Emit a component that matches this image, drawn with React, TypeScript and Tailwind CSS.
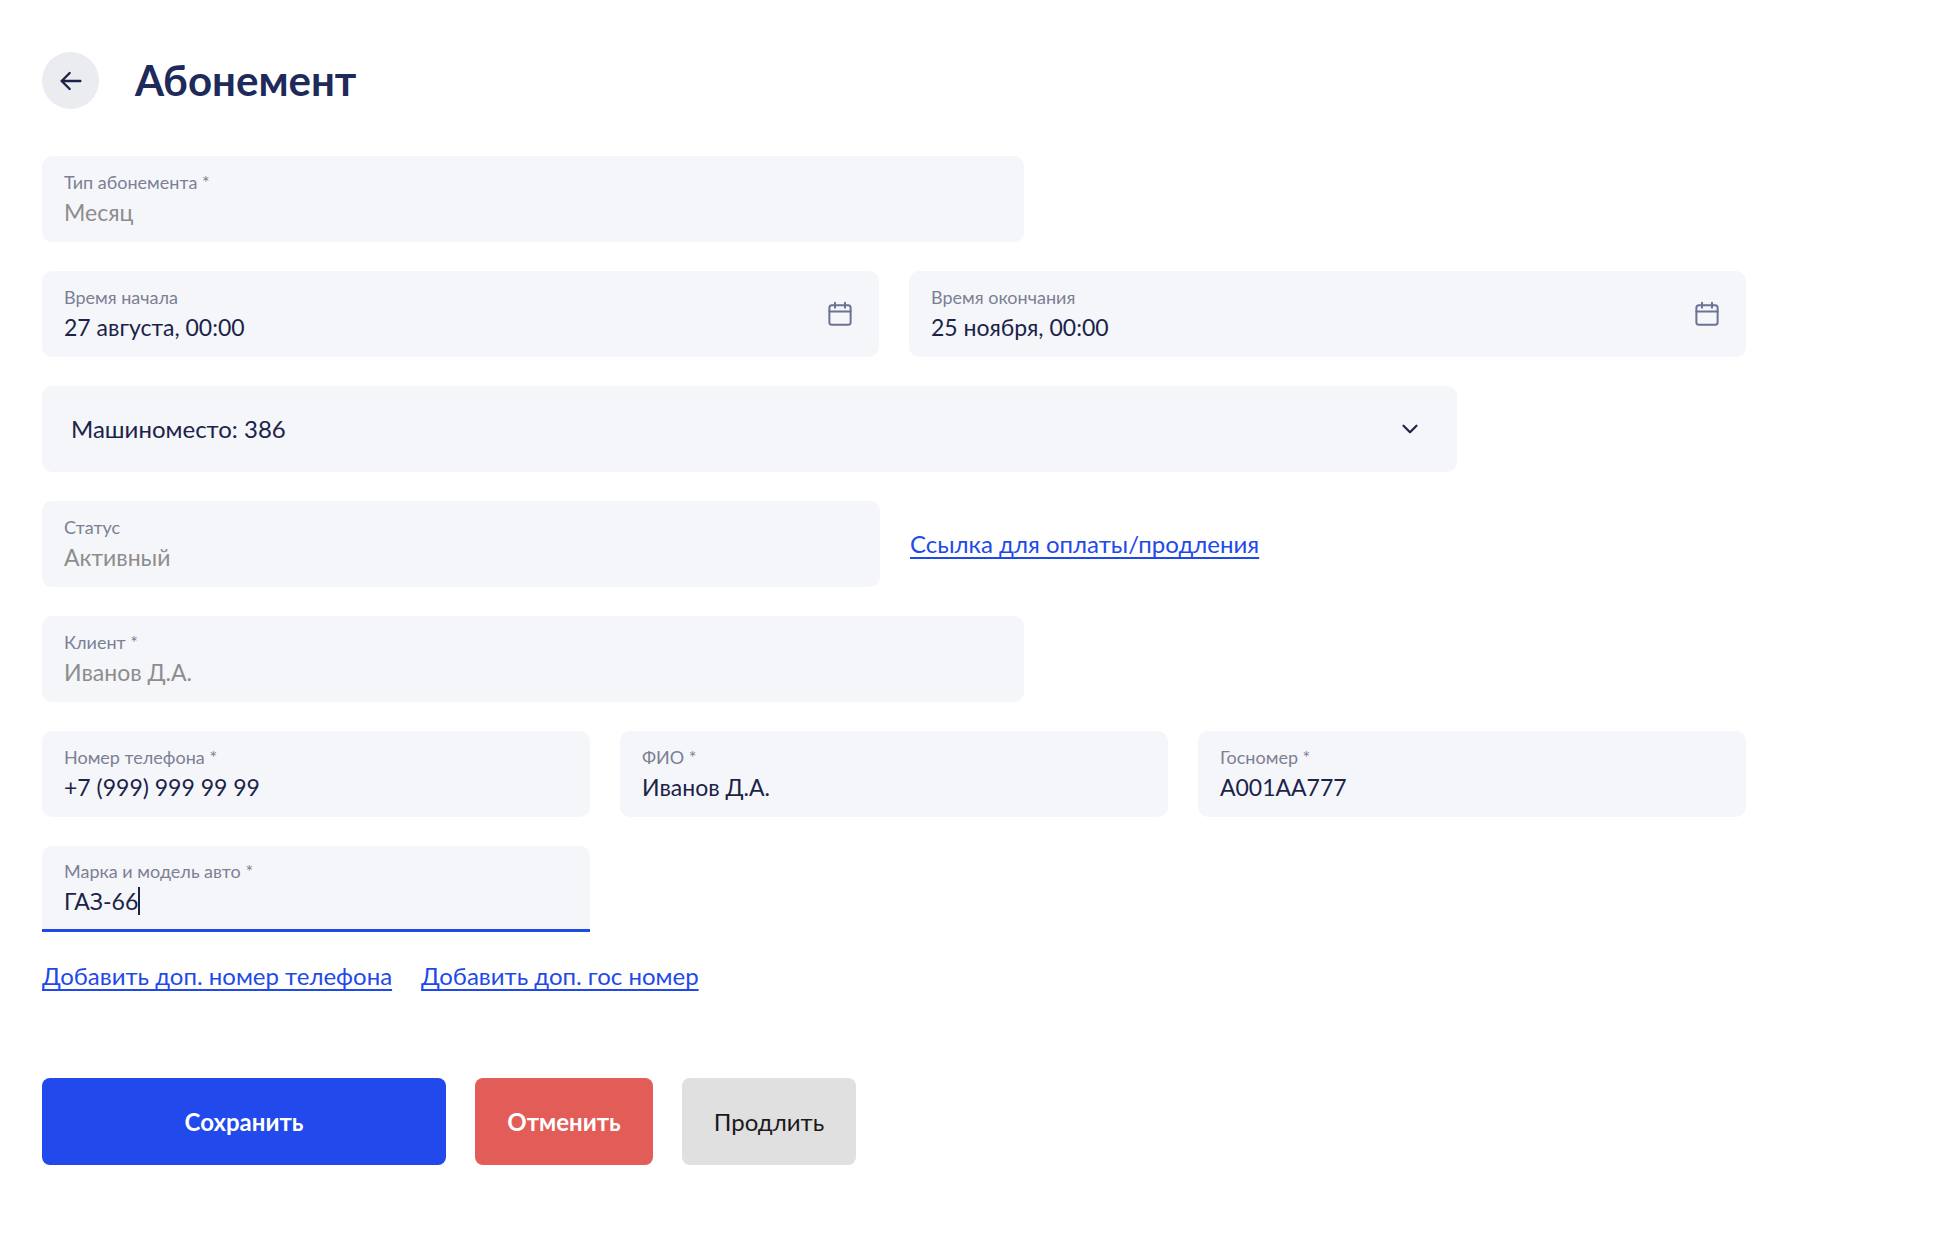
import React from 'react';

const CalendarIcon = () => (
    <svg viewBox="0 0 24 24" fill="none" className="w-[30px] h-[30px]" stroke="#6b7394" strokeWidth="1.6" strokeLinecap="round">
        <rect x="3.5" y="5" width="17" height="15.5" rx="2" />
        <path d="M3.5 10h17M8 3v4M16 3v4" />
    </svg>
);

const Field = ({ label, value, muted = false, icon, className = '' }: { label: string; value: string; muted?: boolean; icon?: boolean; className?: string }) => (
    <div className={`h-[86px] bg-[#f5f6fa] rounded-[10px] pl-[22px] pr-[24px] flex items-center ${className}`}>
        <div className="flex flex-col flex-1">
            <span className="text-[18px] leading-[24px] text-[#7b8094]">{label}</span>
            <span className={`text-[23px] leading-[32px] mt-[2px] ${muted ? 'text-[#8d8d8d]' : 'text-[#1b2348]'}`}>{value}</span>
        </div>
        {icon && <CalendarIcon />}
    </div>
);

export default function App() {
    return (
        <div className="min-h-screen bg-white px-[42px] pt-[49px]" style={{ fontFamily: 'Lato, "Noto Sans", sans-serif' }}>
            <div className="flex items-center gap-[36px]">
                <div className="w-[57px] h-[57px] rounded-full bg-[#ebecf0] flex items-center justify-center">
                    <svg viewBox="0 0 24 24" fill="none" className="w-[32px] h-[32px]" stroke="#1b2348" strokeWidth="1.8" strokeLinecap="round" strokeLinejoin="round">
                        <path d="M19 12H5M11 6l-6 6 6 6" />
                    </svg>
                </div>
                <h1 className="text-[42px] font-bold text-[#1e2a5a]">Абонемент</h1>
            </div>

            <div className="mt-[44px] flex flex-col gap-[29px] w-[1704px]">
                <Field label="Тип абонемента *" value="Месяц" muted className="w-[982px]" />
                <div className="flex gap-[30px]">
                    <Field label="Время начала" value="27 августа, 00:00" icon className="flex-1" />
                    <Field label="Время окончания" value="25 ноября, 00:00" icon className="flex-1" />
                </div>
                <div className="h-[86px] w-[1415px] bg-[#f5f6fa] rounded-[10px] pl-[29px] pr-[34px] flex items-center justify-between">
                    <span className="text-[24px] text-[#1b2348]">Машиноместо: 386</span>
                    <svg viewBox="0 0 24 24" fill="none" className="w-[26px] h-[26px]" stroke="#1b2348" strokeWidth="2" strokeLinecap="round" strokeLinejoin="round">
                        <path d="M6 9l6 6 6-6" />
                    </svg>
                </div>
                <div className="flex gap-[30px] items-center">
                    <Field label="Статус" value="Активный" muted className="w-[838px]" />
                    <a href="#" className="text-[24px] text-[#1f4ae8] underline underline-offset-4">Ссылка для оплаты/продления</a>
                </div>
                <Field label="Клиент *" value="Иванов Д.А." muted className="w-[982px]" />
                <div className="flex gap-[30px]">
                    <Field label="Номер телефона *" value="+7 (999) 999 99 99" className="flex-1" />
                    <Field label="ФИО *" value="Иванов Д.А." className="flex-1" />
                    <Field label="Госномер *" value="А001АА777" className="flex-1" />
                </div>
                <div className="w-[548px] h-[86px] bg-[#f5f6fa] rounded-t-[10px] border-b-[3px] border-[#1f4ae8] pl-[22px] flex flex-col justify-center">
                    <span className="text-[18px] leading-[24px] text-[#7b8094]">Марка и модель авто *</span>
                    <span className="text-[23px] leading-[32px] mt-[2px] text-[#1b2348] flex items-center">ГАЗ-66<span className="w-[2px] h-[28px] bg-[#1b2348]" /></span>
                </div>
            </div>

            <div className="mt-[26px] flex gap-[29px] text-[24px] text-[#1f4ae8]">
                <a href="#" className="underline underline-offset-4">Добавить доп. номер телефона</a>
                <a href="#" className="underline underline-offset-4">Добавить доп. гос номер</a>
            </div>

            <div className="mt-[84px] flex gap-[29px]">
                <button className="w-[404px] h-[87px] rounded-[8px] bg-[#2249ec] text-white text-[24px] font-bold">Сохранить</button>
                <button className="w-[178px] h-[87px] rounded-[8px] bg-[#e25c58] text-white text-[24px] font-bold">Отменить</button>
                <button className="w-[174px] h-[87px] rounded-[8px] bg-[#e0e0e0] text-[#1a1a1a] text-[24px]">Продлить</button>
            </div>
        </div>
    );
}
